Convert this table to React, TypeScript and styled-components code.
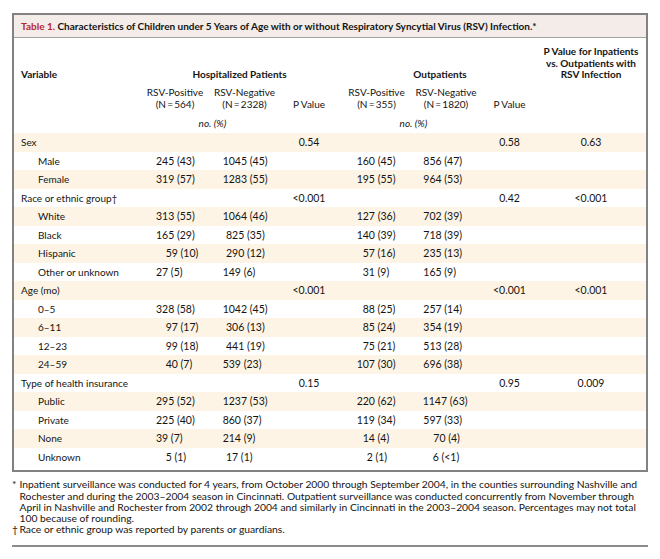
import React from "react";
import styled, { createGlobalStyle, css } from "styled-components";

const GlobalStyle = createGlobalStyle`
  html, body { margin: 0; padding: 0; background: #ffffff; }
  body {
    font-family: Lato, "Open Sans", sans-serif;
    font-size: 10px;
    color: #141414;
  }
`;

const columns = css`
  display: grid;
  grid-template-columns: 126px 70px 69px 60px 75px 64px 63px 100px;
`;

const Page = styled.div`
  width: 636px;
  padding: 13px 12px 0 12px;
`;

const TableBox = styled.div`
  border: 2px solid #828282;
  background: #ffffff;
`;

const TitleBar = styled.div`
  height: 22px;
  display: flex;
  align-items: center;
  padding-left: 7px;
  background: #f3ece8;
  border-bottom: 1px solid #a3a3a3;
  font-weight: 700;
  white-space: nowrap;
`;

const TableNo = styled.span`
  color: #b8262f;
`;

const Header = styled.div`
  padding: 8.25px 0 3.25px;
`;

const HeadRow = styled.div<{ $gap?: number }>`
  ${columns};
  margin-top: ${(p) => p.$gap ?? 0}px;
  line-height: 11.5px;
  align-items: end;
`;

const HeadCell = styled.div<{ $col: string; $bold?: boolean; $italic?: boolean; $dx?: number }>`
  grid-column: ${(p) => p.$col};
  text-align: center;
  font-weight: ${(p) => (p.$bold ? 700 : 400)};
  font-style: ${(p) => (p.$italic ? "italic" : "normal")};
  padding-left: ${(p) => (p.$dx ?? 0) * 2}px;
  white-space: nowrap;
`;

const VariableHead = styled.div`
  grid-column: 1;
  padding-left: 7px;
  font-weight: 700;
`;

const Body = styled.div`
  padding-bottom: 4px;
`;

const DataRow = styled.div<{ $stripe: boolean }>`
  ${columns};
  height: 18.5px;
  align-items: center;
  background: ${(p) => (p.$stripe ? "#fdf4e6" : "#ffffff")};
  white-space: nowrap;
`;

const Label = styled.div<{ $sub: boolean }>`
  padding-left: ${(p) => (p.$sub ? 24 : 7)}px;
`;

const Count = styled.div<{ $x: number }>`
  padding-left: ${(p) => p.$x}px;
  font-size: 10.5px;
`;

const PValue = styled.div`
  text-align: center;
  font-size: 10.5px;
`;

const Notes = styled.div`
  padding: 7.4px 0 9.4px;
  font-size: 10.3px;
  line-height: 11.25px;
`;

const Note = styled.div`
  display: flex;
`;

const Mark = styled.span`
  flex: 0 0 7.5px;
`;

const NoteText = styled.span`
  white-space: nowrap;
`;

const Rule = styled.div`
  border-top: 2px solid #8c8c8c;
`;

type Cnt = [string, number];
type Row = {
  label: string;
  sub?: boolean;
  p?: [string, string, string];
  c?: [Cnt, Cnt, Cnt, Cnt];
};

const rows: Row[] = [
  { label: "Sex", p: ["0.54", "0.58", "0.63"] },
  { label: "Male", sub: true, c: [["245 (43)", 16], ["1045 (45)", 12.7], ["160 (45)", 17.7], ["856 (47)", 9.3]] },
  { label: "Female", sub: true, c: [["319 (57)", 16], ["1283 (55)", 12.7], ["195 (55)", 17.7], ["964 (53)", 9.3]] },
  { label: "Race or ethnic group\u2020", p: ["<0.001", "0.42", "<0.001"] },
  { label: "White", sub: true, c: [["313 (55)", 16], ["1064 (46)", 12.7], ["127 (36)", 17.7], ["702 (39)", 9.3]] },
  { label: "Black", sub: true, c: [["165 (29)", 16], ["825 (35)", 16], ["140 (39)", 17.7], ["718 (39)", 9.3]] },
  { label: "Hispanic", sub: true, c: [["59 (10)", 25.7], ["290 (12)", 16], ["57 (16)", 23.7], ["235 (13)", 9.3]] },
  { label: "Other or unknown", sub: true, c: [["27 (5)", 16], ["149 (6)", 12.7], ["31 (9)", 23.7], ["165 (9)", 9.3]] },
  { label: "Age (mo)", p: ["<0.001", "<0.001", "<0.001"] },
  { label: "0\u20135", sub: true, c: [["328 (58)", 16], ["1042 (45)", 12.7], ["88 (25)", 23.7], ["257 (14)", 9.3]] },
  { label: "6\u201311", sub: true, c: [["97 (17)", 25.7], ["306 (13)", 16], ["85 (24)", 23.7], ["354 (19)", 9.3]] },
  { label: "12\u201323", sub: true, c: [["99 (18)", 25.7], ["441 (19)", 16], ["75 (21)", 23.7], ["513 (28)", 9.3]] },
  { label: "24\u201359", sub: true, c: [["40 (7)", 25.7], ["539 (23)", 12.7], ["107 (30)", 17.7], ["696 (38)", 9.3]] },
  { label: "Type of health insurance", p: ["0.15", "0.95", "0.009"] },
  { label: "Public", sub: true, c: [["295 (52)", 16], ["1237 (53)", 12.7], ["220 (62)", 17.7], ["1147 (63)", 8.7]] },
  { label: "Private", sub: true, c: [["225 (40)", 16], ["860 (37)", 12.7], ["119 (34)", 17.7], ["597 (33)", 9.3]] },
  { label: "None", sub: true, c: [["39 (7)", 16], ["214 (9)", 12.7], ["14 (4)", 23.7], ["70 (4)", 19.3]] },
  { label: "Unknown", sub: true, c: [["5 (1)", 25.7], ["17 (1)", 16], ["2 (1)", 27.7], ["6 (<1)", 18.7]] },
];

const n = (v: string) => `(N\u2009=\u2009${v})`;

export default function App() {
  return (
    <>
      <GlobalStyle />
      <Page>
        <TableBox>
          <TitleBar>
            <TableNo>Table 1.</TableNo>&nbsp;Characteristics of Children under 5 Years of Age with or without
            Respiratory Syncytial Virus (RSV) Infection.*
          </TitleBar>
          <Header>
            <HeadRow>
              <VariableHead>Variable</VariableHead>
              <HeadCell $col="2 / 5" $bold>Hospitalized Patients</HeadCell>
              <HeadCell $col="5 / 8" $bold>Outpatients</HeadCell>
              <HeadCell $col="8" $bold>
                P Value for Inpatients
                <br />
                vs. Outpatients with
                <br />
                RSV Infection
              </HeadCell>
            </HeadRow>
            <HeadRow $gap={6.5}>
              <HeadCell $col="2">RSV-Positive<br />{n("564")}</HeadCell>
              <HeadCell $col="3">RSV-Negative<br />{n("2328")}</HeadCell>
              <HeadCell $col="4">P Value</HeadCell>
              <HeadCell $col="5">RSV-Positive<br />{n("355")}</HeadCell>
              <HeadCell $col="6">RSV-Negative<br />{n("1820")}</HeadCell>
              <HeadCell $col="7">P Value</HeadCell>
            </HeadRow>
            <HeadRow $gap={8}>
              <HeadCell $col="2 / 4" $italic $dx={3}>no. (%)</HeadCell>
              <HeadCell $col="5 / 7" $italic $dx={5}>no. (%)</HeadCell>
            </HeadRow>
          </Header>
          <Body>
            {rows.map((r, i) => (
              <DataRow key={r.label} $stripe={i % 2 === 0}>
                <Label $sub={!!r.sub}>{r.label}</Label>
                {r.c ? (
                  <>
                    <Count $x={r.c[0][1]}>{r.c[0][0]}</Count>
                    <Count $x={r.c[1][1]}>{r.c[1][0]}</Count>
                    <div />
                    <Count $x={r.c[2][1]}>{r.c[2][0]}</Count>
                    <Count $x={r.c[3][1]}>{r.c[3][0]}</Count>
                  </>
                ) : (
                  <>
                    <div />
                    <div />
                    <PValue>{r.p![0]}</PValue>
                    <div />
                    <div />
                    <PValue>{r.p![1]}</PValue>
                    <PValue>{r.p![2]}</PValue>
                  </>
                )}
              </DataRow>
            ))}
          </Body>
        </TableBox>
        <Notes>
          <Note>
            <Mark>*</Mark>
            <NoteText>
              Inpatient surveillance was conducted for 4 years, from October 2000 through September 2004, in the counties surrounding Nashville and
              <br />
              Rochester and during the 2003{"\u2013"}2004 season in Cincinnati. Outpatient surveillance was conducted concurrently from November through
              <br />
              April in Nashville and Rochester from 2002 through 2004 and similarly in Cincinnati in the 2003{"\u2013"}2004 season. Percentages may not total
              <br />
              100 because of rounding.
            </NoteText>
          </Note>
          <Note>
            <Mark>{"\u2020"}</Mark>
            <NoteText>Race or ethnic group was reported by parents or guardians.</NoteText>
          </Note>
        </Notes>
        <Rule />
      </Page>
    </>
  );
}
